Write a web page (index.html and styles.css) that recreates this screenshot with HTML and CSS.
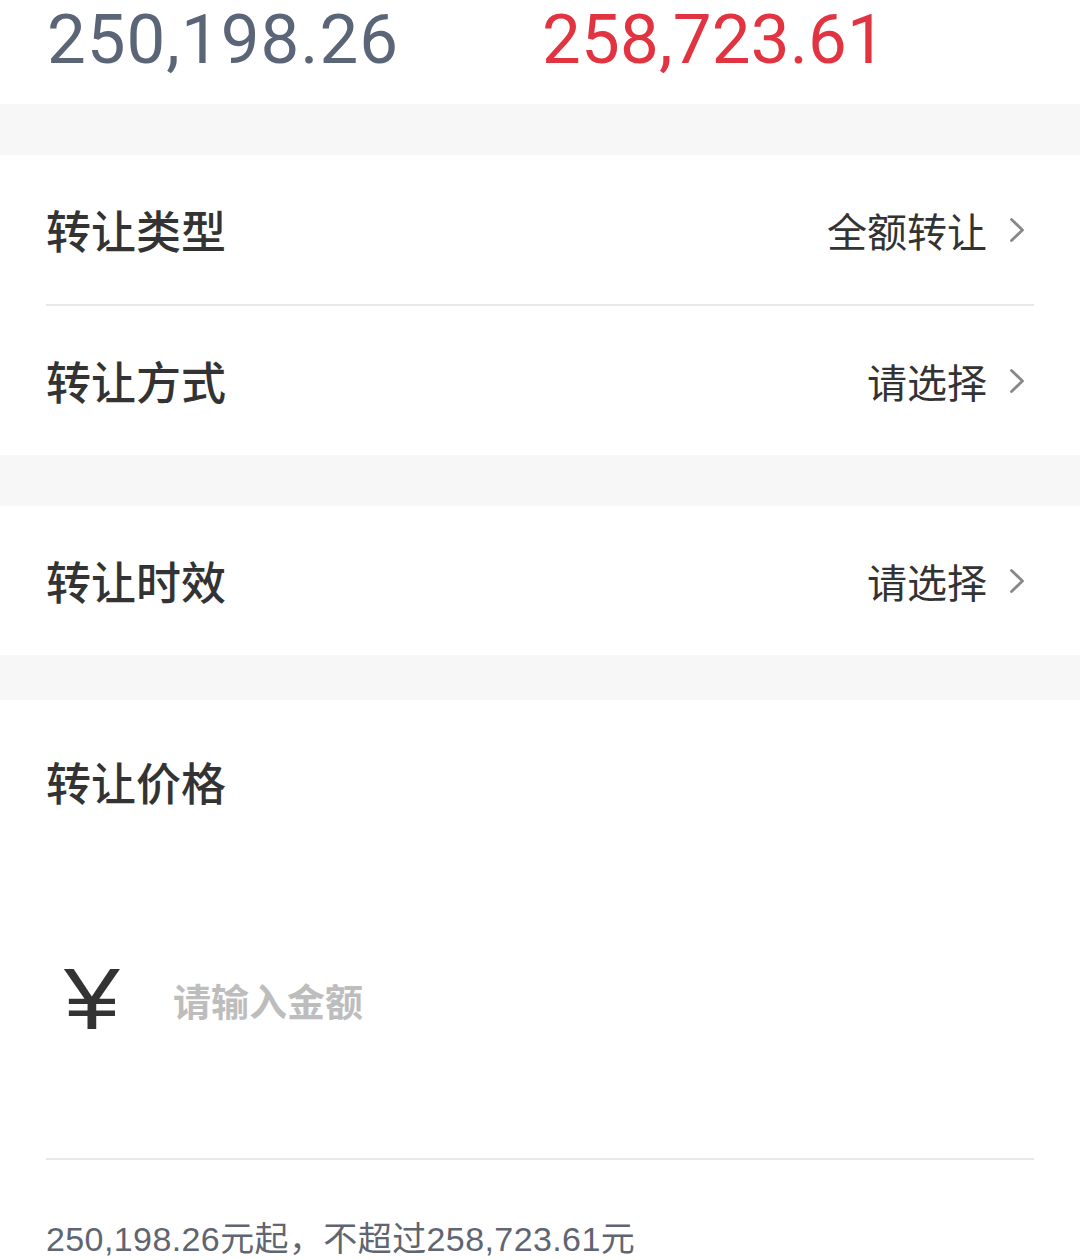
FILE: index.html
```html
<!DOCTYPE html>
<html lang="zh-CN">
<head>
<meta charset="utf-8">
<title>转让</title>
<link rel="stylesheet" href="styles.css">
</head>
<body>
<div class="page">
  <div class="amounts">
    <span class="amount amount-min">250,198.26</span>
    <span class="amount amount-max">258,723.61</span>
  </div>
  <div class="band band-50"></div>
  <div class="group">
    <div class="row row-divided">
      <span class="label">转让类型</span>
      <span class="value">全额转让<svg class="chev" viewBox="0 0 16 26" width="16" height="26"><path d="M2.5 2.5 L13.5 13 L2.5 23.5" fill="none" stroke="#888888" stroke-width="2.8" stroke-linecap="round" stroke-linejoin="round"/></svg></span>
    </div>
    <div class="row">
      <span class="label">转让方式</span>
      <span class="value">请选择<svg class="chev" viewBox="0 0 16 26" width="16" height="26"><path d="M2.5 2.5 L13.5 13 L2.5 23.5" fill="none" stroke="#888888" stroke-width="2.8" stroke-linecap="round" stroke-linejoin="round"/></svg></span>
    </div>
  </div>
  <div class="band band-50"></div>
  <div class="group">
    <div class="row">
      <span class="label">转让时效</span>
      <span class="value">请选择<svg class="chev" viewBox="0 0 16 26" width="16" height="26"><path d="M2.5 2.5 L13.5 13 L2.5 23.5" fill="none" stroke="#888888" stroke-width="2.8" stroke-linecap="round" stroke-linejoin="round"/></svg></span>
    </div>
  </div>
  <div class="band band-45"></div>
  <div class="price">
    <div class="price-title">转让价格</div>
    <div class="price-input">
      <span class="yen">¥</span>
      <input class="amount-input" type="text" placeholder="请输入金额">
    </div>
    <div class="price-hint">250,198.26元起，不超过258,723.61元</div>
  </div>
</div>
</body>
</html>
```
FILE: styles.css
```css
html, body {
  margin: 0;
  padding: 0;
  background: #ffffff;
}
body {
  font-family: "Noto Sans CJK SC", "Noto Sans", sans-serif;
  color: #333333;
}
.page {
  width: 1080px;
}
.amounts {
  height: 104px;
  display: grid;
  grid-template-columns: 495px auto;
  padding-left: 47px;
  box-sizing: border-box;
}
.amount {
  font-family: Roboto, "Liberation Sans", sans-serif;
  font-weight: 400;
  font-size: 69px;
  line-height: 80px;
  letter-spacing: 1px;
}
.amount-min {
  color: #5a6578;
}
.amount-max {
  color: #e13340;
  letter-spacing: 0.2px;
}
.band {
  background: #f7f7f7;
}
.band-50 {
  height: 51px;
}
.band-45 {
  height: 45px;
}
.group {
  padding: 0 46px;
}
.row {
  height: 149px;
  display: flex;
  align-items: center;
  justify-content: space-between;
}
.row-divided {
  border-bottom: 2px solid #e8e8e8;
}
.label {
  font-size: 45px;
  font-weight: 500;
  color: #333333;
  line-height: 60px;
}
.value {
  display: flex;
  align-items: center;
  font-size: 40px;
  color: #333333;
  line-height: 56px;
}
.chev {
  margin-left: 22px;
  margin-right: 9px;
  display: block;
}
.price {
  padding: 0 46px;
}
.price-title {
  font-size: 45px;
  font-weight: 500;
  line-height: 64px;
  padding-top: 50px;
}
.price-input {
  height: 346px;
  box-sizing: border-box;
  padding-top: 26px;
  display: flex;
  align-items: center;
  border-bottom: 2px solid #e8e8e8;
}
.yen {
  display: inline-block;
  font-family: "Liberation Sans", Arial, sans-serif;
  font-size: 88px;
  line-height: 100px;
  color: #333333;
  margin-left: 18px;
  width: 109px;
  transform: scaleX(1.14);
  transform-origin: left center;
}
.amount-input {
  border: none;
  outline: none;
  background: transparent;
  padding: 0;
  margin: 0;
  font-family: "Noto Sans CJK SC", sans-serif;
  font-size: 38px;
  font-weight: 700;
  color: #333333;
  width: 600px;
}
.amount-input::placeholder {
  color: #bdbdbd;
}
.price-hint {
  font-family: "Liberation Sans", "Noto Sans CJK SC", sans-serif;
  font-size: 34px;
  line-height: 48px;
  letter-spacing: 0.4px;
  color: #5f6571;
  margin-top: 55px;
}
```
